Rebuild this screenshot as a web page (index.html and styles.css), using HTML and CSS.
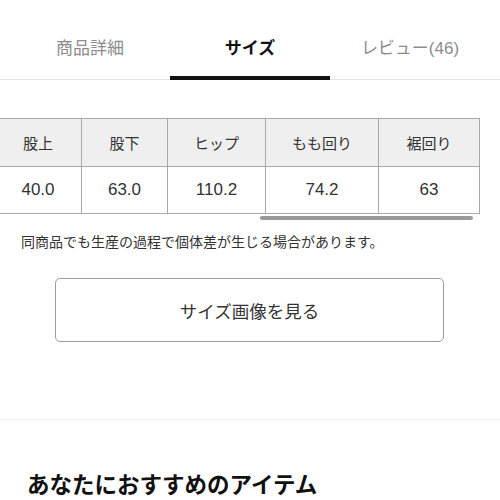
FILE: index.html
```html
<!DOCTYPE html>
<html lang="ja">
<head>
<meta charset="utf-8">
<link rel="stylesheet" href="styles.css">
</head>
<body>
<nav class="tabs">
  <div class="tab">商品詳細</div>
  <div class="tab active">サイズ</div>
  <div class="tab">レビュー(46)</div>
</nav>
<section class="size">
  <div class="table-wrap">
    <table class="size-table">
      <thead>
        <tr><th class="c1">股上</th><th class="c2">股下</th><th class="c3">ヒップ</th><th class="c4">もも回り</th><th class="c5">裾回り</th></tr>
      </thead>
      <tbody>
        <tr><td>40.0</td><td>63.0</td><td>110.2</td><td>74.2</td><td>63</td></tr>
      </tbody>
    </table>
  </div>
  <div class="scrollbar"><div class="thumb"></div></div>
  <p class="note">同商品でも生産の過程で個体差が生じる場合があります。</p>
  <div class="btn-row"><button class="btn">サイズ画像を見る</button></div>
</section>
<hr class="divider">
<h2 class="rec-title">あなたにおすすめのアイテム</h2>
</body>
</html>
```

FILE: styles.css
```css
html, body {
  margin: 0;
  padding: 0;
  background: #fff;
  overflow: hidden;
}
body {
  font-family: "Liberation Sans", "Noto Sans CJK JP", sans-serif;
  color: #333;
}
.tabs {
  display: flex;
  padding: 0 10px;
  height: 80px;
  box-sizing: border-box;
  border-bottom: 1px solid #e3e3e3;
}
.tab {
  width: 160px;
  height: 80px;
  box-sizing: border-box;
  padding-top: 17px;
  border-bottom: 4px solid transparent;
  display: flex;
  align-items: center;
  justify-content: center;
  font-size: 17px;
  color: #8c8c8c;
}
.tab.active {
  color: #111;
  font-weight: bold;
  border-bottom-color: #111;
}
.size {
  padding-top: 38px;
}
.table-wrap {
  overflow: hidden;
  width: 100%;
}
.size-table {
  margin-left: -6px;
  border-collapse: collapse;
  table-layout: fixed;
}
.size-table th,
.size-table td {
  border: 1px solid #a9a9a9;
  text-align: center;
  padding: 0;
  color: #333;
}
.size-table th {
  background: #efefef;
  font-weight: normal;
  font-size: 15px;
  height: 47px;
}
.size-table td {
  font-size: 17px;
  height: 46px;
}
.c1 { width: 86px; }
.c2 { width: 85px; }
.c3 { width: 97px; }
.c4 { width: 112px; }
.c5 { width: 100px; }
.scrollbar {
  height: 4px;
  margin-top: 2px;
  padding-left: 260px;
}
.thumb {
  width: 213px;
  height: 4px;
  border-radius: 2px;
  background: #9a9a9a;
}
.note {
  margin: 12px 0 0 21px;
  font-size: 14px;
  color: #333;
  line-height: 20px;
}
.btn-row {
  padding: 26px 0 0 55px;
}
.btn {
  width: 389px;
  height: 64px;
  background: #fff;
  border: 1px solid #9c9c9c;
  border-radius: 5px;
  font-family: inherit;
  font-size: 17.5px;
  color: #333;
}
.divider {
  margin: 77px 0 0;
  border: 0;
  border-top: 1px solid #ececec;
}
.rec-title {
  margin: 51px 0 0 27px;
  font-size: 22.5px;
  font-weight: bold;
  color: #111;
  line-height: 30px;
}
```
